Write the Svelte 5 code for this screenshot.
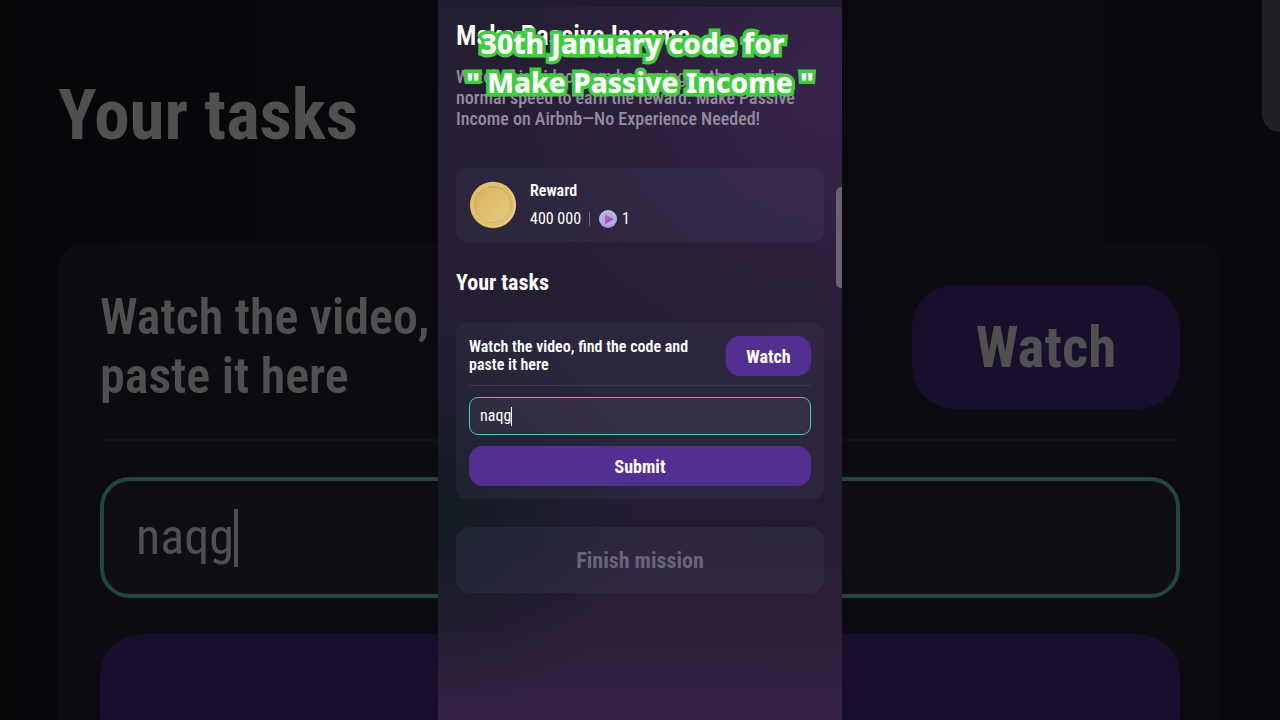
<script>
  let code = $state('naqg');
  const description =
    'Watch this video from beginning to the end, in normal speed to earn the reward. Make Passive Income on Airbnb—No Experience Needed!';
</script>

{#snippet tasks(id)}
  <h2>Your tasks</h2>
  <section class="card task">
    <div class="task-head">
      <label for={id}>Watch the video, find the code and paste it here</label>
      <button class="primary watch" type="button">Watch</button>
    </div>
    <div class="field">
      <input {id} type="text" bind:value={code} autocomplete="off" spellcheck="false" />
      <span class="caret"></span>
    </div>
    <button class="primary submit" type="button">Submit</button>
  </section>
{/snippet}

<div class="stage">
  <div class="backdrop" inert>
    {@render tasks('code-backdrop')}
    <span class="scrollbar"></span>
  </div>

  <main class="phone">
    <h1>Make Passive Income</h1>
    <p class="description">{description}</p>

    <section class="card reward">
      <svg class="coin" viewBox="0 0 48 48" aria-hidden="true">
        <defs>
          <linearGradient id="rim" x1="0" y1="0" x2="1" y2="1">
            <stop offset="0" stop-color="#e0b968" />
            <stop offset="0.5" stop-color="#e6c878" />
            <stop offset="1" stop-color="#f6e3a4" />
          </linearGradient>
          <linearGradient id="face" x1="0" y1="0" x2="1" y2="1">
            <stop offset="0" stop-color="#d9b35c" />
            <stop offset="1" stop-color="#e5cb80" />
          </linearGradient>
        </defs>
        <circle cx="24" cy="24.6" r="23" fill="#8d6a38" />
        <circle cx="24" cy="23.8" r="23" fill="url(#rim)" />
        <circle cx="23.6" cy="23.6" r="21.8" fill="#e0c070" />
        <circle cx="24" cy="23.6" r="18" fill="url(#face)" stroke="#c19d52" stroke-width="0.7" />
        <path d="M9 34A18 18 0 0 0 41.6 28" fill="none" stroke="#efd994" stroke-width="0.4" />
      </svg>
      <div class="reward-text">
        <strong>Reward</strong>
        <div class="amounts">
          <span>400 000</span>
          <span class="bar"></span>
          <svg class="token" viewBox="0 0 18 18" aria-hidden="true">
            <defs>
              <linearGradient id="disc" x1="0" y1="0" x2="0" y2="1">
                <stop offset="0" stop-color="#c3c6e4" />
                <stop offset="1" stop-color="#a69fd0" />
              </linearGradient>
              <linearGradient id="play" x1="0" y1="0" x2="1" y2="1">
                <stop offset="0" stop-color="#c763c9" />
                <stop offset="1" stop-color="#8d49c0" />
              </linearGradient>
            </defs>
            <circle cx="9" cy="9" r="9" fill="url(#disc)" />
            <circle cx="9" cy="9" r="6.8" fill="#b5aeda" />
            <path
              d="M6.8 4.8 13.9 8.7Q14.6 9.2 13.9 9.7L7 13.8Q6 14.2 6 13.2V5.4Q6 4.5 6.8 4.8Z"
              fill="url(#play)"
            />
          </svg>
          <span>1</span>
        </div>
      </div>
    </section>

    {@render tasks('code')}

    <button class="finish" type="button" disabled>Finish mission</button>

    <p class="caption">30th January code for&nbsp;&nbsp;<br />" Make Passive Income "</p>
    <span class="scrollbar"></span>
  </main>
</div>

<style>
  :global(body) {
    margin: 0;
    background: #08070c;
  }

  .stage {
    display: grid;
    grid-template-columns: minmax(0, 1fr) minmax(0, 404px) minmax(0, 1fr);
    height: 100vh;
    overflow: hidden;
    font-family: 'Roboto Condensed', Roboto, sans-serif;
    color: #fff;
  }

  .stage * {
    box-sizing: border-box;
  }

  h1,
  h2,
  p {
    margin: 0;
  }

  button,
  input {
    font: inherit;
    color: inherit;
    border: 0;
    padding: 0;
  }

  .backdrop,
  .phone {
    position: relative;
    display: flex;
    flex-direction: column;
    overflow: hidden;
    grid-row: 1;
    padding: 0 var(--edge);
  }

  .backdrop {
    --edge: 58px;
    --heading: 71px;
    --heading-line: 84px;
    --pad: 42px;
    --radius: 28px;
    --label: 50px;
    --label-line: 59px;
    --action: 57px;
    --action-height: 124px;
    --action-radius: 42px;
    --watch: 268px;
    --field-height: 121px;
    --field-radius: 30px;
    --field-pad: 32px;
    --gap: 36px;
    --rule-gap: 30px;
    --line: 4px;
    --caret: 4px;
    --caret-height: 58px;
    --card: #0c0b11;
    --rule: #131219;
    --field: #100e15;
    --field-border: #21463c;
    --primary: #190e2b;
    grid-column: 1 / -1;
    padding-top: 73px;
    color: #505050;
    background: linear-gradient(to right, #060609, #08070c 20%, #0c090f 80%, #09080d);
  }

  .phone {
    --edge: 18px;
    --heading: 22px;
    --heading-line: 28px;
    --pad: 13px;
    --radius: 9px;
    --label: 16px;
    --label-line: 18px;
    --action: 18px;
    --action-height: 40px;
    --action-radius: 14px;
    --watch: 85px;
    --field-height: 38px;
    --field-radius: 9px;
    --field-pad: 10px;
    --gap: 11px;
    --rule-gap: 9px;
    --line: 1px;
    --caret: 1px;
    --caret-height: 19px;
    --card: rgba(120, 125, 165, 0.09);
    --rule: #3f394e;
    --field: rgba(120, 105, 150, 0.12);
    --field-border: #60c2ae;
    --primary: #542f92;
    grid-column: 2;
    padding-top: 20px;
    background:
      linear-gradient(#211b2f, #211b2f) top / 100% 7px no-repeat,
      radial-gradient(ellipse 50% 28% at 0 71%, #131a21, rgba(19, 26, 33, 0) 100%),
      radial-gradient(ellipse 85% 42% at 100% 12%, #38244b, rgba(56, 36, 75, 0) 100%),
      linear-gradient(#241e33, #251e34 50%, #241d33 72%, #2c1f38 86%, #352347);
  }

  h1 {
    font-size: 27px;
    line-height: 32px;
    font-weight: 600;
  }

  .description {
    margin-top: 14px;
    font-size: 18px;
    line-height: 21px;
    font-weight: 500;
    color: #958c9f;
  }

  .card {
    border-radius: var(--radius);
    background: var(--card);
    padding: var(--pad);
  }

  .reward {
    display: flex;
    align-items: center;
    gap: 13px;
    margin-top: 39px;
    font-size: 16px;
    line-height: 20px;
  }

  .coin {
    width: 48px;
    height: 48px;
  }

  .reward-text {
    display: flex;
    flex-direction: column;
    gap: 8px;
  }

  strong {
    font-weight: 600;
  }

  .amounts {
    display: flex;
    align-items: center;
  }

  .bar {
    width: 1px;
    height: 14px;
    margin: 0 9px 0 8px;
    background: #6f667e;
  }

  .token {
    width: 18px;
    height: 18px;
    margin-right: 5px;
  }

  h2 {
    font-size: var(--heading);
    line-height: var(--heading-line);
    font-weight: 700;
  }

  .phone h2 {
    margin: 27px 0 26px;
  }

  .backdrop h2 {
    margin-bottom: 86px;
  }

  .task {
    display: flex;
    flex-direction: column;
    gap: var(--gap);
  }

  .task-head {
    display: flex;
    align-items: center;
    justify-content: space-between;
    gap: var(--pad);
    padding-bottom: var(--rule-gap);
    border-bottom: var(--line) solid var(--rule);
  }

  .backdrop .task-head {
    border-bottom-width: 2px;
  }

  label {
    font-size: var(--label);
    line-height: var(--label-line);
    font-weight: 600;
  }

  .phone label {
    max-width: 230px;
  }

  .backdrop label {
    max-width: 740px;
  }

  .primary {
    height: var(--action-height);
    border-radius: var(--action-radius);
    background: var(--primary);
    font-size: var(--action);
    font-weight: 700;
  }

  .watch {
    flex: none;
    width: var(--watch);
  }

  .field {
    display: flex;
    align-items: center;
    height: var(--field-height);
    padding: 0 var(--field-pad);
    border: var(--line) solid var(--field-border);
    border-radius: var(--field-radius);
    background: var(--field);
  }

  input {
    field-sizing: content;
    max-width: 95%;
    background: none;
    outline: none;
    font-size: var(--label);
    line-height: var(--label-line);
  }

  .caret {
    width: var(--caret);
    height: var(--caret-height);
    background: currentColor;
  }

  .finish {
    height: 66px;
    margin-top: 28px;
    border-radius: 14px;
    background: rgba(120, 125, 165, 0.1);
    font-size: 22px;
    font-weight: 700;
    color: #696477;
  }

  .caption {
    position: absolute;
    inset: 24px 0 auto;
    text-align: center;
    white-space: nowrap;
    font: 800 28px/39px 'Noto Sans', sans-serif;
    -webkit-text-stroke: 7px #3fcc3d;
    paint-order: stroke fill;
  }

  .scrollbar {
    position: absolute;
    right: 0;
    background: #69626f;
  }

  .phone .scrollbar {
    top: 187px;
    width: 6px;
    height: 101px;
    border-radius: 5px 0 0 5px;
  }

  .backdrop .scrollbar {
    top: 0;
    width: 18px;
    height: 132px;
    border-radius: 0 0 0 18px;
    background: #222025;
  }
</style>
